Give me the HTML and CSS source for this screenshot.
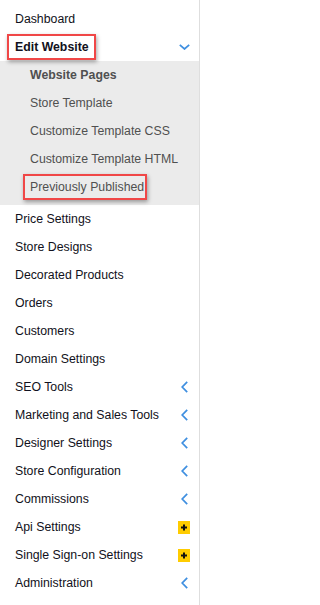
FILE: index.html
```html
<!DOCTYPE html>
<html>
<head>
<meta charset="utf-8">
<link rel="stylesheet" href="styles.css">
</head>
<body>
<nav class="sidebar">
  <div class="item"><span class="label">Dashboard</span></div>
  <div class="item open">
    <span class="label marked bold">Edit Website</span>
    <span class="icon"><svg width="11" height="6" viewBox="0 0 11 6"><polyline points="0.8,0.8 5.5,5 10.2,0.8" fill="none" stroke="#3f8fe0" stroke-width="1.7"/></svg></span>
  </div>
  <div class="submenu">
    <div class="sub"><span class="label bold">Website Pages</span></div>
    <div class="sub"><span class="label">Store Template</span></div>
    <div class="sub"><span class="label">Customize Template CSS</span></div>
    <div class="sub"><span class="label">Customize Template HTML</span></div>
    <div class="sub"><span class="label marked2">Previously Published</span></div>
  </div>
  <div class="item"><span class="label">Price Settings</span></div>
  <div class="item"><span class="label">Store Designs</span></div>
  <div class="item"><span class="label">Decorated Products</span></div>
  <div class="item"><span class="label">Orders</span></div>
  <div class="item"><span class="label">Customers</span></div>
  <div class="item"><span class="label">Domain Settings</span></div>
  <div class="item"><span class="label">SEO Tools</span><span class="icon"><svg class="chev" width="7" height="12" viewBox="0 0 7 12"><polyline points="6.2,0.8 1.2,6 6.2,11.2" fill="none" stroke="#3f8fe0" stroke-width="1.7"/></svg></span></div>
  <div class="item"><span class="label">Marketing and Sales Tools</span><span class="icon"><svg class="chev" width="7" height="12" viewBox="0 0 7 12"><polyline points="6.2,0.8 1.2,6 6.2,11.2" fill="none" stroke="#3f8fe0" stroke-width="1.7"/></svg></span></div>
  <div class="item"><span class="label">Designer Settings</span><span class="icon"><svg class="chev" width="7" height="12" viewBox="0 0 7 12"><polyline points="6.2,0.8 1.2,6 6.2,11.2" fill="none" stroke="#3f8fe0" stroke-width="1.7"/></svg></span></div>
  <div class="item"><span class="label">Store Configuration</span><span class="icon"><svg class="chev" width="7" height="12" viewBox="0 0 7 12"><polyline points="6.2,0.8 1.2,6 6.2,11.2" fill="none" stroke="#3f8fe0" stroke-width="1.7"/></svg></span></div>
  <div class="item"><span class="label">Commissions</span><span class="icon"><svg class="chev" width="7" height="12" viewBox="0 0 7 12"><polyline points="6.2,0.8 1.2,6 6.2,11.2" fill="none" stroke="#3f8fe0" stroke-width="1.7"/></svg></span></div>
  <div class="item"><span class="label">Api Settings</span><span class="icon"><svg width="12" height="13" viewBox="0 0 12 13"><rect width="12" height="13" fill="#ffcc00"/><rect x="3" y="5.5" width="6" height="2" fill="#111"/><rect x="5" y="3.5" width="2" height="6" fill="#111"/></svg></span></div>
  <div class="item"><span class="label">Single Sign-on Settings</span><span class="icon"><svg width="12" height="13" viewBox="0 0 12 13"><rect width="12" height="13" fill="#ffcc00"/><rect x="3" y="5.5" width="6" height="2" fill="#111"/><rect x="5" y="3.5" width="2" height="6" fill="#111"/></svg></span></div>
  <div class="item"><span class="label">Administration</span><span class="icon"><svg class="chev" width="7" height="12" viewBox="0 0 7 12"><polyline points="6.2,0.8 1.2,6 6.2,11.2" fill="none" stroke="#3f8fe0" stroke-width="1.7"/></svg></span></div>
</nav>
</body>
</html>
```

FILE: styles.css
```css
html, body {
  margin: 0;
  padding: 0;
  background: #ffffff;
}
.sidebar {
  box-sizing: border-box;
  width: 200px;
  height: 605px;
  padding-top: 5px;
  border-right: 1px solid #dedede;
  font-family: "Liberation Sans", Arial, sans-serif;
  font-size: 12.3px;
  color: #111120;
  overflow: hidden;
}
.item {
  height: 28px;
  display: flex;
  align-items: center;
  justify-content: space-between;
  padding: 0 8px 0 15px;
}
.label {
  white-space: nowrap;
  line-height: 16px;
}
.bold {
  font-weight: bold;
}
.icon {
  width: 14px;
  height: 14px;
  display: flex;
  align-items: center;
  justify-content: center;
}
.chev {
  margin-left: 1px;
}
.submenu {
  background: #ebebeb;
  padding: 0 0 4px 0;
}
.sub {
  height: 28px;
  display: flex;
  align-items: center;
  padding-left: 30px;
  color: #505050;
}
.marked {
  margin-left: -8px;
  padding: 3px 5px 3px 6px;
  border: 2px solid #f04747;
  box-shadow: 1px 2px 4px rgba(0, 0, 0, 0.35);
  background: #ffffff;
}
.marked2 {
  margin-left: -7px;
  padding: 3px 1px 3px 5px;
  border: 2px solid #f04747;
  box-shadow: 1px 2px 4px rgba(0, 0, 0, 0.35);
}
```
